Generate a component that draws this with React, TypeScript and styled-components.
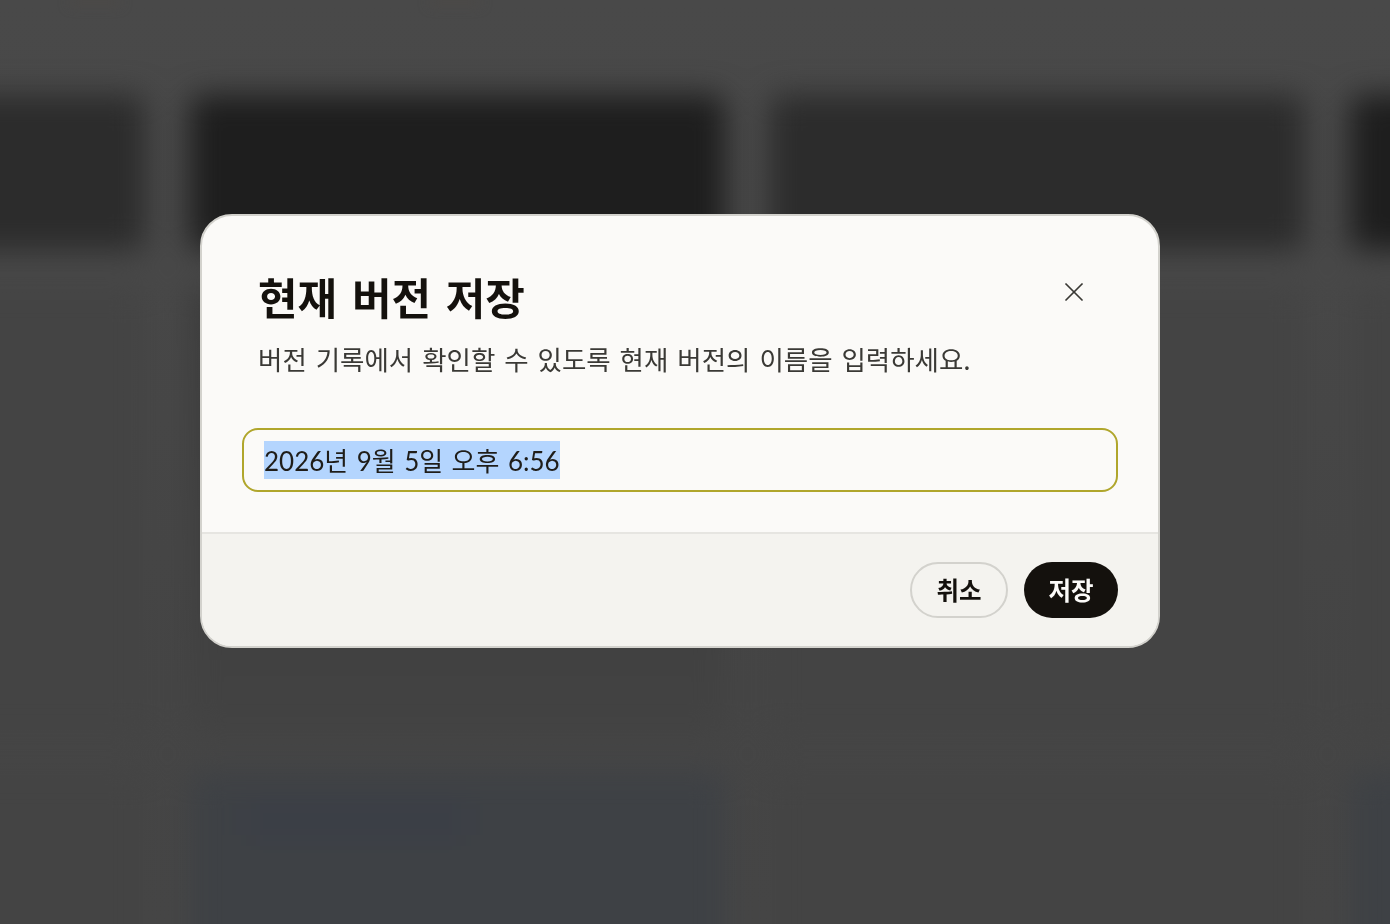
import { FC } from "react";
import styled, { createGlobalStyle } from "styled-components";
import { X } from "lucide-react";

const GlobalStyle = createGlobalStyle`
  html, body {
    margin: 0;
    height: 100%;
    overflow: hidden;
    background: #4a4a4a;
  }
`;

const KR = `"Noto Sans CJK KR", "Noto Sans", sans-serif`;
const MIXED = `Lato, "Noto Sans CJK KR", sans-serif`;

type Tone = "dark" | "darker" | "mid" | "blue" | "plain";

const toneColors: Record<Tone, string> = {
  darker: "#1e1e1e",
  dark: "#2c2c2c",
  mid: "linear-gradient(#3c3c3c, #404040 70%, #434343)",
  blue: "#3e4145",
  plain: "#444444",
};

const App: FC = () => {
  return (
    <>
      <GlobalStyle />
      <Backdrop>
        <TopBar>
          <TopMark />
          <TopMark />
        </TopBar>
        <CardGrid>
          <BlurCard $tone="dark" />
          <BlurCard $tone="darker" />
          <BlurCard $tone="dark" />
          <BlurCard $tone="darker" />
          <BlurCard $tone="plain" />
          <BlurCard $tone="mid" />
          <BlurCard $tone="plain" />
          <BlurCard $tone="plain" />
          <BlurCard $tone="plain" />
          <BlurCard $tone="blue">
            <BlueLabel />
          </BlurCard>
          <BlurCard $tone="plain" />
          <BlurCard $tone="blue" />
        </CardGrid>
      </Backdrop>
      <Overlay>
        <Dialog>
          <DialogBody>
            <Header>
              <Title>현재 버전 저장</Title>
              <CloseButton aria-label="닫기">
                <X size={32} strokeWidth={1.3} />
              </CloseButton>
            </Header>
            <Description>
              버전 기록에서 확인할 수 있도록 현재 버전의 이름을 입력하세요.
            </Description>
            <NameField>
              <Selected>2026년 9월 5일 오후 6:56</Selected>
            </NameField>
          </DialogBody>
          <Footer>
            <CancelButton>취소</CancelButton>
            <SaveButton>저장</SaveButton>
          </Footer>
        </Dialog>
      </Overlay>
    </>
  );
};

export default App;

const Backdrop = styled.div`
  height: 100vh;
  overflow: hidden;
  background-image: linear-gradient(#494949, #484848 30%, #454545 75%, #464646);
`;

const TopBar = styled.div`
  display: flex;
  gap: 310px;
  height: 95px;
  padding-left: 70px;
  box-sizing: border-box;
  filter: blur(6px);
`;

const TopMark = styled.div`
  width: 50px;
  height: 5px;
  background: #4e4a46;
`;

const CardGrid = styled.div`
  display: grid;
  grid-template-columns: repeat(4, 535px);
  grid-template-rows: 155px 450px 400px;
  gap: 36px 45px;
  margin-left: -390px;
  filter: blur(15px);
`;

const BlurCard = styled.div<{ $tone: Tone }>`
  padding: 34px 56px;
  box-sizing: border-box;
  border-radius: 12px;
  background: ${(p) => toneColors[p.$tone]};
`;

const BlueLabel = styled.div`
  width: 220px;
  height: 30px;
  background: #3a3e47;
`;

const Overlay = styled.div`
  position: fixed;
  inset: 0;
  display: flex;
  justify-content: center;
  align-items: flex-start;
  padding: 214px 30px 0 0;
`;

const Dialog = styled.div`
  width: 960px;
  box-sizing: border-box;
  background: #fbfaf8;
  border: 2px solid #d3d2cd;
  border-radius: 32px;
  overflow: hidden;
`;

const DialogBody = styled.div`
  padding: 50px 40px 40px 40px;
`;

const Header = styled.div`
  display: flex;
  justify-content: space-between;
  align-items: flex-start;
  padding: 0 28px 0 16px;
`;

const Title = styled.h2`
  margin: 0;
  font-family: ${KR};
  font-size: 43px;
  line-height: 60px;
  font-weight: 700;
  word-spacing: 5px;
  color: #14110d;
`;

const CloseButton = styled.button`
  display: flex;
  margin: 10px 0 0;
  padding: 0;
  border: 0;
  background: none;
  color: #3a3935;
`;

const Description = styled.p`
  margin: 13px 0 0;
  padding: 0 16px;
  font-family: ${KR};
  font-size: 26.5px;
  line-height: 40px;
  font-weight: 400;
  word-spacing: 3px;
  color: #3a3935;
`;

const NameField = styled.div`
  display: flex;
  align-items: center;
  box-sizing: border-box;
  height: 64px;
  margin-top: 49px;
  padding: 0 20px;
  border: 2px solid #b0a62c;
  border-radius: 16px;
  font-family: ${MIXED};
  font-size: 26px;
  word-spacing: 1.8px;
  color: #1f1d19;
`;

const Selected = styled.span`
  display: inline-block;
  height: 38px;
  line-height: 40px;
  background: #b4d5fe;
`;

const Footer = styled.div`
  display: flex;
  justify-content: flex-end;
  gap: 16px;
  padding: 28px 40px;
  background: #f4f3ef;
  border-top: 2px solid #e6e5e1;
`;

const CancelButton = styled.button`
  width: 98px;
  height: 56px;
  padding: 0 0 2px;
  border: 2px solid #d3d2cd;
  border-radius: 28px;
  background: transparent;
  font-family: ${KR};
  font-size: 24.5px;
  font-weight: 700;
  color: #14110d;
`;

const SaveButton = styled.button`
  width: 94px;
  height: 56px;
  padding: 0 0 2px;
  border: 0;
  border-radius: 28px;
  background: #14110d;
  font-family: ${KR};
  font-size: 24.5px;
  font-weight: 700;
  color: #fcfbf9;
`;
